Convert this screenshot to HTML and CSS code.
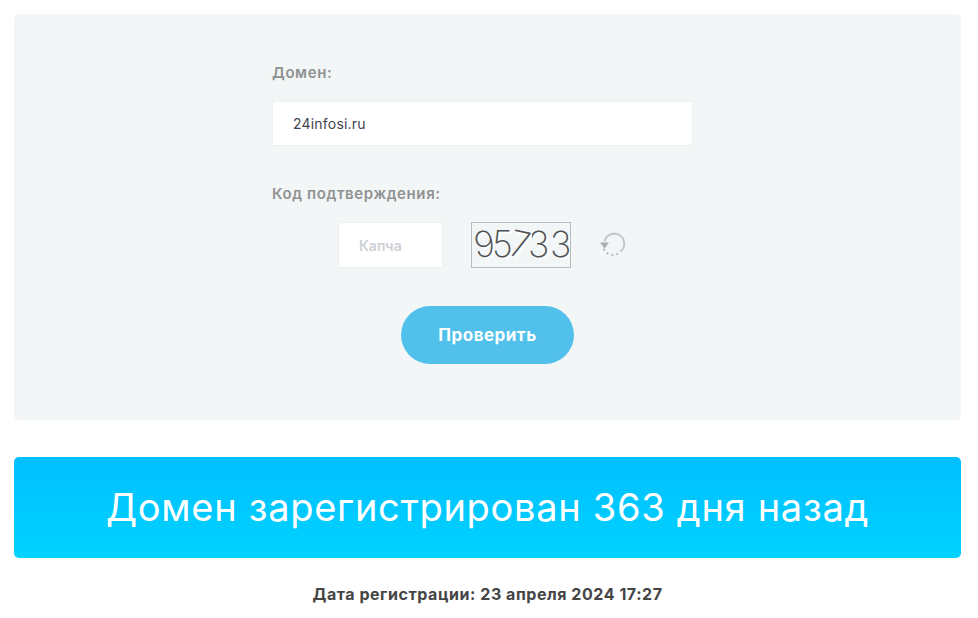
FILE: index.html
```html
<!DOCTYPE html>
<html lang="en">
<head>
    <meta charset="UTF-8">
    <meta name="viewport" content="width=device-width, initial-scale=1.0">
    <title>Возраст домена</title>
    <link rel="stylesheet" href="styles.css">
</head>
<body>
    <div class="check-panel">
        <div class="form-group">
            <label class="form-label" for="domain">Домен:</label>
            <input class="text-input domain-input" id="domain" type="text" value="24infosi.ru">
        </div>
        <div class="form-group code-group">
            <label class="form-label" for="captcha">Код подтверждения:</label>
            <div class="captcha-row">
                <input class="text-input captcha-input" id="captcha" type="text" placeholder="Капча">
                <div class="captcha-image">
                    <span class="digit tilt-left">9</span><span class="digit">5</span><span class="digit tilt-right">7</span><span class="digit">3</span><span class="digit digit-last">3</span>
                </div>
                <svg class="refresh-icon" width="28" height="28" viewBox="0 0 28 28">
                    <path class="refresh-line" d="M6.500 10.500A10 10 0 1 1 22.500 20.500"/>
                    <path class="refresh-dots" d="M20 22.600A10 10 0 0 1 5.400 17"/>
                    <path class="refresh-arrow" d="M2 11.500h9l-4.500 6z"/>
                </svg>
            </div>
        </div>
        <button class="check-button">Проверить</button>
    </div>

    <div class="result-banner">Домен зарегистрирован 363 дня назад</div>
    <div class="result-date">Дата регистрации: 23 апреля 2024 17:27</div>
</body>
</html>
```

FILE: styles.css
```css
body {
    margin: 0;
    padding: 14px 17px 0 14px;
    font-family: 'Inter', 'Open Sans', sans-serif;
    background-color: #fff;
}

.check-panel {
    display: flex;
    flex-direction: column;
    height: 406px;
    box-sizing: border-box;
    padding: 50px 0 0 258px;
    background-color: #f3f6f7;
    border-radius: 5px;
}

.form-group {
    display: flex;
    flex-direction: column;
    width: 421px;
}

.code-group {
    margin-top: 39px;
}

.form-label {
    height: 18px;
    margin-bottom: 19px;
    font-size: 15px;
    line-height: 18px;
    font-weight: 600;
    letter-spacing: 0.6px;
    color: #8f9291;
}

.text-input {
    box-sizing: border-box;
    border: 1px solid #eef1f2;
    border-radius: 2px;
    background-color: #fff;
    font-family: inherit;
    outline: none;
}

.domain-input {
    height: 45px;
    padding: 0 20px;
    font-size: 14px;
    letter-spacing: 0.2px;
    color: #3f4350;
}

.captcha-row {
    display: flex;
    align-items: center;
    height: 46px;
    margin-left: 66px;
}

.captcha-input {
    width: 105px;
    height: 46px;
    padding: 0 20px;
    font-size: 14px;
    font-weight: 600;
}

.captcha-input::placeholder {
    color: #ccd0d6;
    opacity: 1;
}

.captcha-image {
    display: flex;
    justify-content: center;
    box-sizing: border-box;
    width: 100px;
    height: 46px;
    margin-left: 28px;
    border: 1px solid #b9bcbc;
    background-color: #f3f6f7;
    overflow: hidden;
}

.digit {
    width: 18px;
    font-size: 36px;
    line-height: 42px;
    font-weight: 200;
    text-align: center;
    color: #4f5254;
    text-shadow: 2px 2px 0 #fff;
}

.digit-last {
    margin-left: 4px;
}

.tilt-left {
    transform: rotate(-8deg);
}

.tilt-right {
    transform: rotate(12deg);
}

.refresh-icon {
    margin-left: 27px;
}

.refresh-line {
    fill: none;
    stroke: #c3c8ca;
    stroke-width: 2;
}

.refresh-dots {
    fill: none;
    stroke: #b6babc;
    stroke-width: 2;
    stroke-dasharray: 2 3;
}

.refresh-arrow {
    fill: #a9adaf;
}

.check-button {
    align-self: flex-start;
    width: 173px;
    height: 58px;
    margin-top: 38px;
    margin-left: 129px;
    border: none;
    border-radius: 29px;
    background-color: #51c1ec;
    color: #fff;
    font-family: inherit;
    font-size: 17px;
    font-weight: 700;
    letter-spacing: 0.5px;
    cursor: pointer;
}

.result-banner {
    height: 101px;
    margin-top: 37px;
    border-radius: 5px;
    background: linear-gradient(to bottom, #00bfff, #00d2ff);
    color: #fff;
    font-size: 38px;
    line-height: 101px;
    font-weight: 400;
    letter-spacing: 0.7px;
    text-align: center;
}

.result-date {
    margin-top: 26px;
    font-size: 16px;
    line-height: 20px;
    font-weight: 700;
    letter-spacing: 0.55px;
    color: #454545;
    text-align: center;
}
```
